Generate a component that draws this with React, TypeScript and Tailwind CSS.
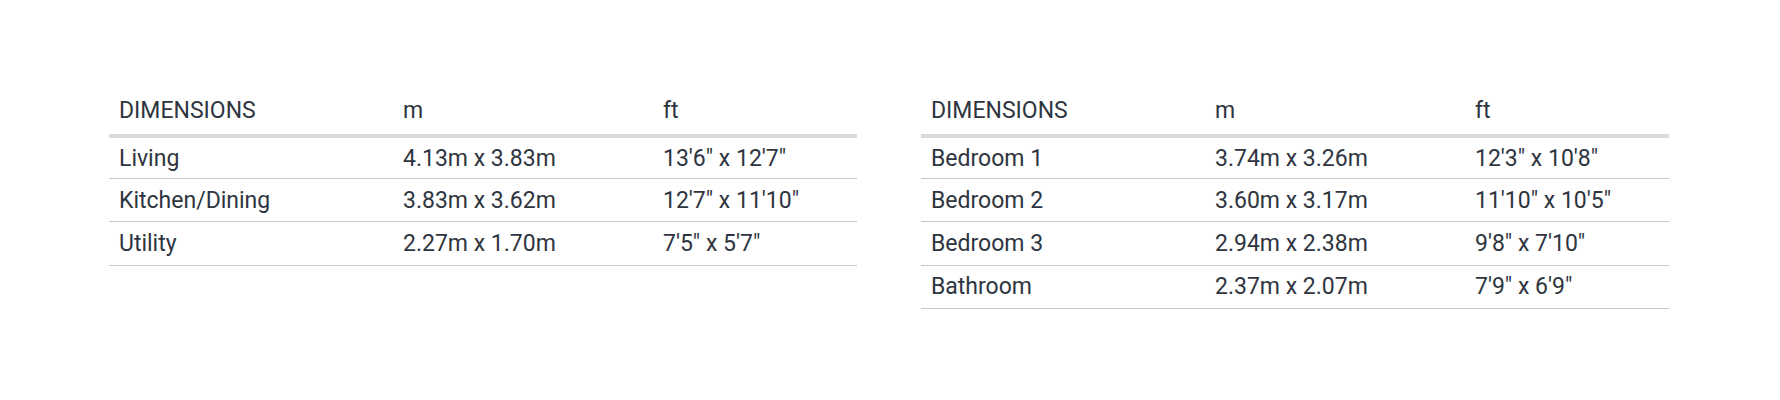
import React from "react";

type Row = { room: string; m: string; ft: string };

const groundFloor: Row[] = [
  { room: "Living", m: "4.13m x 3.83m", ft: "13'6\" x 12'7\"" },
  { room: "Kitchen/Dining", m: "3.83m x 3.62m", ft: "12'7\" x 11'10\"" },
  { room: "Utility", m: "2.27m x 1.70m", ft: "7'5\" x 5'7\"" },
];

const firstFloor: Row[] = [
  { room: "Bedroom 1", m: "3.74m x 3.26m", ft: "12'3\" x 10'8\"" },
  { room: "Bedroom 2", m: "3.60m x 3.17m", ft: "11'10\" x 10'5\"" },
  { room: "Bedroom 3", m: "2.94m x 2.38m", ft: "9'8\" x 7'10\"" },
  { room: "Bathroom", m: "2.37m x 2.07m", ft: "7'9\" x 6'9\"" },
];

const Cells: React.FC<{ a: string; b: string; c: string }> = ({ a, b, c }) => (
  <>
    <div className="w-[284px] pl-[10px]">{a}</div>
    <div className="w-[260px] pl-[10px]">{b}</div>
    <div className="flex-1 pl-[10px]">{c}</div>
  </>
);

const DimensionsTable: React.FC<{ rows: Row[] }> = ({ rows }) => (
  <div className="w-[748px]">
    <div className="flex items-center h-[51px] border-b-4 border-[#dadada]">
      <Cells a="DIMENSIONS" b="m" c="ft" />
    </div>
    {rows.map((r, i) => (
      <div
        key={r.room}
        className={`flex items-center border-b border-[#c8c8c8] ${
          i === 0 ? "h-[41px]" : "h-[43.4px]"
        }`}
      >
        <Cells a={r.room} b={r.m} c={r.ft} />
      </div>
    ))}
  </div>
);

export default function App() {
  return (
    <div className="w-[1780px] h-[400px] bg-white pt-[87px] pl-[109px] font-['Roboto',sans-serif] text-[23px] leading-[23px] text-[#2e3540]">
      <div className="flex items-start gap-[64px]">
        <DimensionsTable rows={groundFloor} />
        <DimensionsTable rows={firstFloor} />
      </div>
    </div>
  );
}
